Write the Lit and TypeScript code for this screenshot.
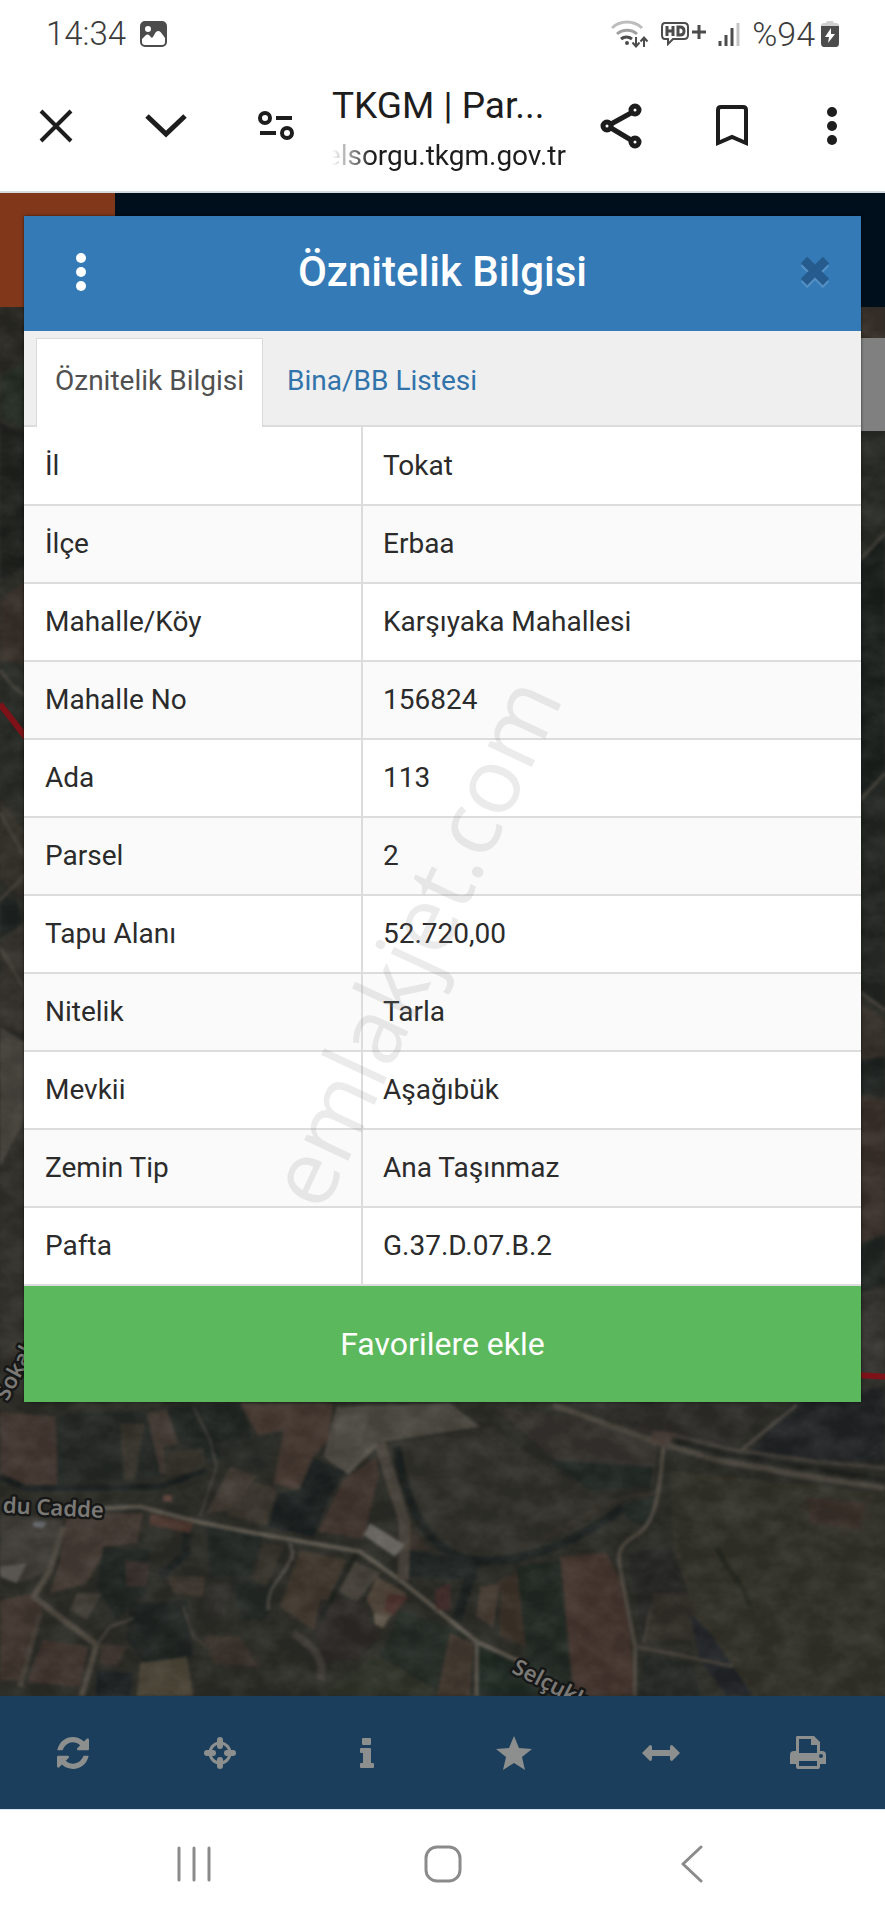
import { LitElement, html, svg, css } from "lit";
import { customElement, property } from "lit/decorators.js";

/* ---------- Satellite map ---------- */

type Shape = [points: string, fill: string];
type Stroke = [d: string, color: string, width: number];

const EDGE_FIELDS: Shape[] = [
  ["0,921 80,921 80,1300 0,1250", "#2b2a24"],
  ["0,1130 80,1080 80,1290 0,1250", "#232c22"],
  ["0,1270 80,1300 80,1700 0,1740", "#20221e"],
  ["0,1800 80,1740 80,1990 0,1980", "#3b312a"],
  ["0,1990 80,2000 80,2450 0,2380", "#292c26"],
  ["0,2400 80,2500 80,2700 0,2640", "#37332b"],
  ["0,2690 50,2700 70,2780 0,2810", "#1d2422"],
  ["0,2820 80,2760 80,3100 0,3080", "#37342e"],
  ["0,3080 80,3130 80,3350 0,3500", "#4c4740"],
  ["0,3520 80,3340 80,4200 0,4260", "#32312b"],
  ["2580,921 2655,921 2655,1020 2580,1020", "#3d342c"],
  ["2580,1290 2655,1290 2655,1590 2580,1680", "#2a2d26"],
  ["2580,1680 2655,1600 2655,2320 2580,2390", "#1a201d"],
  ["2580,2400 2655,2320 2655,3030 2580,2980", "#222622"],
  ["2580,3010 2655,3060 2655,3180 2580,3190", "#383029"],
  ["2580,3180 2655,3170 2655,3290 2580,3280", "#1d2321"],
  ["2580,3290 2655,3300 2655,3700 2580,3730", "#3c312b"],
  ["2580,3730 2655,3710 2655,3850 2580,3880", "#1f2522"],
  ["2580,3880 2655,3860 2655,4130 2580,4130", "#373530"],
];

const FIELDS: Shape[] = [
  ["0,95 165,110 175,320 60,315 0,285", "#483932"],
  ["175,105 440,90 490,290 170,330", "#252a26"],
  ["360,130 435,130 405,300 370,300", "#38352c"],
  ["440,100 500,90 535,190 490,200 500,280 480,280", "#463b34"],
  ["500,80 720,70 760,180 640,250 540,190", "#212724"],
  ["495,215 610,205 620,270 500,290", "#35322a"],
  ["720,70 1000,70 985,180 940,230 895,330 820,310 850,160 780,175", "#493930"],
  ["640,190 720,180 850,150 800,280 680,255", "#2b2d28"],
  ["1010,80 1350,70 1440,140 1150,185 1040,280 970,230", "#504b43"],
  ["940,235 1035,275 990,350 940,470 805,440 835,340 900,330", "#1b2121"],
  ["1130,230 1135,290 1090,475 955,455 1030,300", "#47372f"],
  ["690,260 770,290 700,390 620,400", "#463d35"],
  ["765,305 830,330 800,435 680,405", "#3f392f"],
  ["620,430 790,470 750,590 630,590", "#212825"],
  ["200,400 430,400 410,490 320,500 260,610 150,640 180,540", "#4a3d35"],
  ["0,400 190,420 150,570 60,610 0,560", "#413e38"],
  ["0,660 100,640 130,700 60,900 0,900", "#46382f"],
  ["130,780 265,800 240,920 80,905", "#44352e"],
  ["310,500 450,510 440,640 350,720 290,620", "#202724"],
  ["375,540 450,550 440,620 380,620", "#3a302b"],
  ["230,640 305,640 260,720 210,690", "#47423a"],
  ["300,790 380,800 350,860 300,850", "#423630"],
  ["390,670 560,660 580,830 440,860 380,780", "#1f2523"],
  ["500,590 615,590 610,650 520,640", "#423a31"],
  ["620,620 690,610 680,710 610,690", "#34332e"],
  ["690,600 830,610 800,720 730,720", "#252b26"],
  ["610,770 720,770 780,860 640,850", "#3d332c"],
  ["420,850 560,830 580,948 410,948", "#504838"],
  ["290,870 400,880 390,948 290,948", "#1c2223"],
  ["790,490 850,500 800,620 760,600", "#3a362c"],
  ["900,510 1040,540 940,750 840,680", "#443a2e"],
  ["1060,540 1140,580 1070,665 1010,630", "#48423a"],
  ["1130,590 1220,640 1150,745 1100,660", "#57493c"],
  ["960,660 1080,660 1140,760 1090,830 980,850 940,760", "#2e2b27"],
  ["1130,820 1320,930 1300,948 960,948", "#30352a"],
  ["1220,420 1290,510 1220,510", "#3d342d"],
  ["1220,510 1430,540 1430,600 1220,590", "#1d2423"],
  ["1200,690 1400,760 1340,948 1140,830", "#242c25"],
  ["1350,760 1420,790 1410,948 1310,948", "#473b30"],
  ["1440,620 1500,610 1480,740 1430,710", "#4b3e33"],
  ["1500,600 1570,570 1580,800 1500,770", "#3f3429"],
  ["1550,560 1690,540 1720,948 1590,900", "#222b24"],
  ["1680,530 1820,520 1880,640 1905,948 1720,948", "#49362e"],
  ["1435,790 1560,840 1740,948 1435,948", "#202a23"],
  ["1880,520 2010,500 2080,640 1930,780", "#272725"],
  ["1960,640 2080,640 2140,770 1930,790", "#333029"],
  ["1480,80 1980,150 1960,310 1740,320 1600,180", "#37342f"],
  ["1640,240 1960,260 1950,320 1770,330", "#212925"],
  ["1870,370 1960,350 1950,440 1880,420", "#222a25"],
  ["1680,60 2350,60 2200,200 2010,170", "#2f2e2a"],
  ["2380,60 2655,20 2655,250 2240,230", "#222426"],
  ["2010,270 2655,340 2655,948 2250,948 2100,760 2020,500", "#34342a"],
  ["2420,350 2600,370 2580,450 2430,430", "#3c3129"],
  ["2070,700 2130,760 2260,948 2180,948 2100,840", "#22252a"],
  ["1930,820 2080,850 2100,948 1920,948", "#262b26"],
];

const TREES: Stroke[] = [
  ["M1190 200 C1230 440 1310 530 1440 545 C1620 545 1780 450 1870 380", "#1c2322", 26],
  ["M1430 530 L1370 720", "#1c2322", 30],
  ["M0 290 L80 325 L480 320 L620 270", "#1a2020", 18],
  ["M2030 185 L2220 230 L2655 300", "#20231f", 14],
  ["M2150 500 C2180 580 2230 600 2250 680", "#262920", 16],
  ["M560 430 L560 520 L480 590", "#1e2524", 24],
  ["M1070 520 L960 720", "#20241f", 14],
  ["M880 760 C940 800 980 840 960 900", "#45403a", 24],
];

const ROADS: Stroke[] = [
  ["M310 385 L420 380 L590 425 L740 455 L1080 515 L1200 600 L1350 720 L1430 785 L1560 845", "#635d52", 13],
  ["M190 440 L150 570 L100 650 L290 795 L245 948", "#544d43", 18],
  ["M120 700 L60 920", "#4b433a", 16],
  ["M290 795 L330 740 L400 715", "#4e4a42", 8],
  ["M600 410 L650 260 L630 180 L580 80", "#454239", 7],
  ["M880 510 C860 600 800 600 805 690", "#57524a", 9],
  ["M870 490 L880 540", "#57524a", 9],
  ["M550 680 L580 770 L620 800", "#443e35", 8],
  ["M1140 190 L1215 430 L1210 600", "#4f483e", 34],
  ["M1130 190 L1040 280", "#5a554b", 14],
  ["M1660 75 L1950 180 L2150 240 L2400 285 L2655 325", "#4d473f", 18],
  ["M2000 160 L2200 210 L2450 245 L2655 265", "#45413a", 12],
  ["M2225 210 L2390 75", "#504b42", 10],
  ["M1990 200 C1980 320 1970 440 1900 470 C1840 510 1855 530 1870 620 L1905 800 L1905 948", "#544e44", 12],
  ["M1910 800 L2060 830 L2200 860", "#4b453c", 10],
  ["M1930 790 L1950 690", "#454036", 6],
  ["M1430 785 L1430 948", "#5e584e", 12],
  ["M1620 480 C1760 420 1820 340 1970 340", "#3b372f", 7],
];

const ROOFS: Shape[] = [
  ["1110,430 1215,495 1185,530 1090,465", "#6f6c66"],
  ["0,560 80,550 50,610 0,590", "#66635c"],
  ["1010,110 1110,100 1080,200 1000,210", "#59554d"],
  ["1165,640 1225,650 1180,705 1150,690", "#54342f"],
  ["1305,630 1350,610 1350,690 1310,690", "#482d2b"],
  ["450,400 580,430 570,460 450,435", "#54392f"],
  ["490,345 515,345 515,365 490,365", "#6b4840"],
  ["1960,150 2030,160 2000,200 1950,190", "#4d3f38"],
  ["100,425 140,425 130,445 100,440", "#6c7076"],
  ["1120,700 1165,710 1150,745 1125,735", "#6a6051"],
];

const shapes = (list: Shape[]) =>
  list.map(([points, fill]) => svg`<polygon points=${points} fill=${fill} />`);
const strokes = (list: Stroke[]) =>
  list.map(
    ([d, color, width]) =>
      svg`<path d=${d} stroke=${color} stroke-width=${width} fill="none" stroke-linejoin="round" />`
  );

@customElement("satellite-map")
export class SatelliteMap extends LitElement {
  static styles = css`
    :host {
      display: block;
      height: 0;
      min-height: 100%;
      overflow: hidden;
    }
    svg {
      display: block;
      width: 100%;
      height: 100%;
    }
    .label {
      font: 600 66px "Noto Sans", sans-serif;
      fill: #7b7975;
      stroke: #161716;
      stroke-width: 14px;
      paint-order: stroke;
      stroke-linejoin: round;
    }
  `;

  render() {
    return html`
      <svg viewBox="0 579 2655 4509" preserveAspectRatio="xMidYMid slice" role="img" aria-label="Harita">
        <defs>
          <filter id="soft" x="0" y="0" width="1" height="1" color-interpolation-filters="sRGB">
            <feGaussianBlur stdDeviation="5" />
            <feColorMatrix type="saturate" values="0.85" />
          </filter>
          <filter id="grain" x="0" y="0" width="1" height="1" color-interpolation-filters="sRGB">
            <feTurbulence type="fractalNoise" baseFrequency="0.012 0.016" numOctaves="4" seed="7" />
            <feColorMatrix values="1 0 0 0 -0.32  1 0 0 0 -0.32  1 0 0 0 -0.34  0 0 0 0 0.13" />
          </filter>
        </defs>
        <rect y="579" width="2655" height="4509" fill="#2d2d28" />
        <g filter="url(#soft)">
          ${shapes(EDGE_FIELDS)}
          <g fill="none" stroke="#4a463d" stroke-width="9">
            <path d="M0 2010 L40 2060 L80 2090" />
            <path d="M0 2440 L80 2580 M0 2700 L80 2620 M0 2840 L80 2980" />
            <path d="M2580 1680 L2655 1600 M2580 2400 L2655 2320 M2580 2975 L2655 3030" />
          </g>
          <g transform="translate(0 4140)">
            ${shapes(FIELDS)}
            <path d="M1160 195 L1480 140 C1560 200 1700 320 1870 370 C1760 470 1600 540 1430 540 C1340 520 1230 480 1220 400Z" fill="#33322b" />
            ${strokes(TREES)} ${strokes(ROADS)} ${shapes(ROOFS)}
          </g>
        </g>
        <rect y="579" width="2655" height="4509" filter="url(#grain)" />
        <g fill="none" stroke="#7d1318" stroke-width="18">
          <path d="M0 2112 L80 2215" />
          <path d="M2570 4125 L2655 4130" />
        </g>
        <text class="label" transform="translate(310 4554) rotate(3)" text-anchor="end">du Cadde</text>
        <text class="label" transform="translate(1532 5016) rotate(27)">Selçuklu</text>
        <text class="label" transform="translate(22 4206) rotate(-62)">Sokak</text>
      </svg>
    `;
  }
}

/* ---------- Icons ---------- */

const icons = {
  picture: svg`<svg width="27" height="26" viewBox="0 0 27 26"><path fill="#4c4c4c" fill-rule="evenodd" d="M5 0h17a5 5 0 0 1 5 5v16a5 5 0 0 1-5 5H5a5 5 0 0 1-5-5V5a5 5 0 0 1 5-5zM8 5a3 3 0 1 0 0 6 3 3 0 0 0 0-6zM2 18v3c0 2 1 3 3 3h17c2 0 3-1 3-3v-4c-4-6-5-7-7-7s-3 2-5 6c-1 1-2 1-3-1-2-2-3-2-5 0z"/></svg>`,
  wifi: svg`<svg width="38" height="28" viewBox="0 0 38 28" fill="none" stroke-width="3"><path stroke="#bdbdbd" d="M1 8a22 22 0 0 1 30 0"/><path stroke="#a0a0a0" d="M6 14a15 15 0 0 1 20 0"/><path stroke="#4c4c4c" d="M10 19a9 9 0 0 1 11 0"/><circle cx="16" cy="23" r="2" fill="#4c4c4c"/><path stroke="#4c4c4c" stroke-width="2" d="M25 17v9M21.500 22.500l3.500 4 3.500-4M33 27v-9M29.500 21.500l3.500-4 3.500 4"/></svg>`,
  hd: svg`<svg width="45" height="24" viewBox="0 0 45 24" fill="none" stroke="#4c4c4c"><path stroke-width="2" d="M4 1h19q4 0 4 4v8q0 4-4 4H12l-5 5v-5H4q-3 0-3-4V5q0-4 3-4z"/><path stroke-width="3" d="M6 4v10M12 4v10M6 9h6M17 5v8h2q4 0 4-4t-4-4zM31 10h14M38 3v14"/></svg>`,
  signal: svg`<svg width="22" height="24" viewBox="0 0 22 24" stroke-width="3"><path stroke="#4c4c4c" d="M2 24v-5M8 24V13M14 24V6"/><path stroke="#c4c4c4" d="M20 24V1"/></svg>`,
  battery: svg`<svg width="18" height="26" viewBox="0 0 18 26"><path fill="#cfcfcf" d="M5 2q0-2 2-2h4q2 0 2 2h2q3 0 3 3H0q0-3 3-3z"/><path fill="#4c4c4c" fill-rule="evenodd" d="M0 5h18v17q0 4-3 4H3q-3 0-3-4zM10 7l-6 9h4l-1 6 7-9h-4z"/></svg>`,
  close: svg`<svg width="34" height="34" viewBox="0 0 34 34" fill="none" stroke="#1d1d1d" stroke-width="4"><path d="M2 2l30 30M32 2L2 32"/></svg>`,
  down: svg`<svg width="42" height="26" viewBox="0 0 42 26" fill="none" stroke="#1d1d1d" stroke-width="5"><path d="M2 3l19 18L40 3"/></svg>`,
  tune: svg`<svg width="36" height="30" viewBox="0 0 36 30" fill="none" stroke="#1d1d1d" stroke-width="4"><circle cx="7" cy="7" r="5"/><circle cx="29" cy="22" r="5"/><path d="M18 7h16M2 22h16"/></svg>`,
  share: svg`<svg width="42" height="46" viewBox="0 0 42 46" fill="none" stroke="#1d1d1d" stroke-width="5"><circle cx="35" cy="7" r="4"/><circle cx="7" cy="23" r="4"/><circle cx="35" cy="39" r="4"/><path d="M11 21l20-11M11 25l20 12"/></svg>`,
  bookmark: svg`<svg width="34" height="42" viewBox="0 0 34 42" fill="none" stroke="#1d1d1d" stroke-width="4"><path d="M3 38V5q0-3 3-3h22q3 0 3 3v33l-14-6z"/></svg>`,
  dots: svg`<svg width="12" height="40" viewBox="0 0 12 40" fill="currentColor"><circle cx="6" cy="6" r="5"/><circle cx="6" cy="20" r="5"/><circle cx="6" cy="34" r="5"/></svg>`,
  cross: svg`<svg width="30" height="32" viewBox="0 0 30 32" fill="none" stroke-width="9"><path stroke="#5490c4" d="M4 7l22 22M26 7L4 29"/><path stroke="#265c8d" d="M4 4l22 22M26 4L4 26"/></svg>`,
  refresh: svg`<svg width="32" height="32" viewBox="0 0 1536 1536" fill="#8c8f8d"><path d="M1511 928q0 5-1 7-64 268-268 434.500T764 1536q-146 0-282.500-55T238 1324l-129 129q-19 19-45 19t-45-19-19-45V960q0-26 19-45t45-19h448q26 0 45 19t19 45-19 45l-137 137q71 66 161 102t187 36q134 0 250-65t186-179q11-17 53-117 8-23 30-23h192q13 0 22.500 9.500t9.500 22.500zm25-800v448q0 26-19 45t-45 19h-448q-26 0-45-19t-19-45 19-45l138-138Q969 256 768 256q-134 0-250 65T332 500q-11 17-53 117-8 23-30 23H50q-13 0-22.500-9.500T18 608v-7q65-268 270-434.500T768 0q146 0 284 55.500T1297 212l130-129q19-19 45-19t45 19 19 45z"/></svg>`,
  target: svg`<svg width="32" height="32" viewBox="0 0 32 32" fill="none" stroke="#8c8f8d"><circle cx="16" cy="16" r="10" stroke-width="3"/><path stroke-width="6" stroke-linecap="round" d="M16 3v6M16 23v6M3 16h6M23 16h6"/></svg>`,
  info: svg`<svg width="14" height="30" viewBox="0 0 14 30" fill="#8c8f8d"><path d="M3 0h7q1 0 1 1v5q0 1-1 1H3q-1 0-1-1V1q0-1 1-1zM1 10h9q1 0 1 1v14h2q1 0 1 1v3q0 1-1 1H1q-1 0-1-1v-3q0-1 1-1h2V15H1q-1 0-1-1v-3q0-1 1-1z"/></svg>`,
  star: svg`<svg width="36" height="34" viewBox="0 0 36 34" fill="#8c8f8d"><path d="M18 0l5 12 13 1-10 8 3 13-11-7-11 7 3-13-10-8 13-1z"/></svg>`,
  arrows: svg`<svg width="38" height="16" viewBox="0 0 38 16" fill="#8c8f8d"><path d="M0 8l8-8q2 0 2 2v3h18V2q0-2 2-2l8 8-8 8q-2 0-2-2v-3H10v3q0 2-2 2z"/></svg>`,
  print: svg`<svg width="36" height="33" viewBox="0 0 36 33"><path fill="#8c8f8d" fill-rule="evenodd" d="M7 0h17l6 6v9h2q4 0 4 4v9h-6v3q0 2-2 2H8q-2 0-2-2v-3H0v-9q0-4 4-4h2V2q0-2 1-2zm2 3v14h18V9h-6V3zm0 22v5h18v-5zm22-7a2 2 0 1 0 0 4 2 2 0 0 0 0-4z"/></svg>`,
  recents: svg`<svg width="34" height="36" viewBox="0 0 34 36" stroke="#8b8b8b" stroke-width="3" stroke-linecap="round"><path d="M2 2v32M17 2v32M32 2v32"/></svg>`,
  home: svg`<svg width="38" height="38" viewBox="0 0 38 38" fill="none" stroke="#8b8b8b" stroke-width="3"><rect x="2" y="2" width="34" height="34" rx="11"/></svg>`,
  back: svg`<svg width="22" height="38" viewBox="0 0 22 38" fill="none" stroke="#8b8b8b" stroke-width="3" stroke-linecap="round" stroke-linejoin="round"><path d="M20 2L2 19l18 17"/></svg>`,
};

/* ---------- Page ---------- */

const ROWS: [string, string][] = [
  ["İl", "Tokat"],
  ["İlçe", "Erbaa"],
  ["Mahalle/Köy", "Karşıyaka Mahallesi"],
  ["Mahalle No", "156824"],
  ["Ada", "113"],
  ["Parsel", "2"],
  ["Tapu Alanı", "52.720,00"],
  ["Nitelik", "Tarla"],
  ["Mevkii", "Aşağıbük"],
  ["Zemin Tip", "Ana Taşınmaz"],
  ["Pafta", "G.37.D.07.B.2"],
];

const TOOLS: [string, unknown][] = [
  ["Yenile", icons.refresh],
  ["Konum", icons.target],
  ["Bilgi", icons.info],
  ["Favoriler", icons.star],
  ["Ölçüm", icons.arrows],
  ["Yazdır", icons.print],
];

@customElement("app-root")
export class AppRoot extends LitElement {
  @property() heading = "Öznitelik Bilgisi";

  static styles = css`
    :host {
      display: flex;
      flex-direction: column;
      min-height: 100vh;
      background: #fff;
      color: #2b2b2b;
      font-family: Roboto, sans-serif;
      font-size: 28px;
      line-height: 32px;
    }
    * {
      box-sizing: border-box;
    }
    svg {
      display: block;
      flex: none;
    }
    button {
      display: flex;
      align-items: center;
      justify-content: center;
      padding: 0;
      border: 0;
      background: none;
      color: inherit;
      font: inherit;
    }

    .status {
      display: flex;
      align-items: center;
      gap: 14px;
      padding: 18px 46px 0 46px;
      font-size: 33px;
      font-weight: 300;
      color: #3c3c3c;
    }
    .indicators {
      display: flex;
      align-items: center;
      gap: 12px;
      margin-left: auto;
    }
    .charge {
      display: flex;
      align-items: center;
      gap: 6px;
      font-size: 34px;
    }

    .browser {
      display: flex;
      align-items: center;
      height: 143px;
      padding: 14px 36px 4px 28px;
      border-bottom: 2px solid #d5dade;
      color: #1d1d1d;
    }
    .browser button {
      flex: none;
      width: 56px;
      height: 56px;
    }
    .left {
      display: flex;
      gap: 54px;
    }
    .address {
      flex: 1;
      min-width: 0;
      padding: 8px 0 0 28px;
    }
    .title {
      overflow: hidden;
      font-size: 37px;
      line-height: 44px;
      white-space: nowrap;
    }
    .url {
      display: flex;
      justify-content: flex-end;
      width: 234px;
      max-width: 100%;
      overflow: hidden;
      padding-top: 8px;
      line-height: 40px;
      white-space: nowrap;
      -webkit-mask-image: linear-gradient(90deg, transparent, #000 40px);
      mask-image: linear-gradient(90deg, transparent, #000 40px);
    }
    .right {
      display: flex;
      gap: 55px;
    }
    .browser .more {
      width: 34px;
    }

    .stage {
      display: grid;
      flex: 1;
      grid-template-columns: minmax(0, 1fr);
      grid-template-rows: 1fr;
    }
    .stage > * {
      grid-area: 1 / 1;
    }
    .site {
      display: flex;
      flex-direction: column;
      gap: 31px;
    }
    .banner {
      display: flex;
      height: 114px;
      background: #000f1c;
    }
    .logo {
      width: 13%;
      background: #81381a;
    }
    .panel {
      align-self: flex-end;
      width: 48px;
      height: 93px;
      background: #808080;
    }

    .modal {
      align-self: start;
      margin: 23px 24px 40px;
      background: #fff;
      box-shadow: 0 0 3px rgba(0, 0, 0, 0.6);
    }
    .head {
      display: grid;
      grid-template-columns: 114px 1fr 92px;
      align-items: center;
      height: 115px;
      padding-bottom: 4px;
      background: #337ab7;
      color: #fff;
    }
    .head > * {
      grid-row: 1;
    }
    h1 {
      grid-column: 1 / -1;
      margin: 0;
      font-size: 42px;
      font-weight: 500;
      line-height: 48px;
      text-align: center;
    }
    .head button {
      height: 64px;
    }
    .options {
      grid-column: 1;
    }
    .dismiss {
      grid-column: 3;
    }
    .tabs {
      display: flex;
      height: 96px;
      padding: 7px 12px 0;
      background: #efefef;
      border-bottom: 2px solid #dcdcdc;
    }
    .tab {
      margin-bottom: -2px;
      padding: 0 18px 4px;
      border: 1px solid transparent;
      border-bottom: 0;
      color: #3173ab;
    }
    .tab + .tab {
      margin-left: 5px;
    }
    .tab.active {
      border-color: #dadada;
      background: #fff;
      color: #505050;
    }
    .records {
      position: relative;
    }
    table {
      width: 100%;
      border-collapse: collapse;
      table-layout: fixed;
    }
    th,
    td {
      height: 78px;
      padding: 0 20px;
      border: 2px solid #dcdcdc;
      border-top: 0;
      font-weight: 400;
      text-align: left;
    }
    th {
      width: 338px;
      padding-left: 21px;
      border-left: 0;
    }
    td {
      border-right: 0;
    }
    tr:nth-child(even) {
      background: #fafafa;
    }
    .watermark {
      position: absolute;
      top: 514px;
      left: 388px;
      color: rgba(128, 128, 128, 0.16);
      font-family: "Open Sans", sans-serif;
      font-size: 91px;
      line-height: 96px;
      pointer-events: none;
      transform: translate(-50%, -50%) rotate(-65deg);
    }
    .save {
      width: 100%;
      height: 116px;
      background: #5cb85c;
      color: #fff;
      font-size: 32px;
    }

    .tools {
      display: grid;
      grid-template-columns: repeat(6, 1fr);
      height: 113px;
      padding-right: 4px;
      background: #1b3e5d;
    }
    .nav {
      display: grid;
      grid-template-columns: repeat(3, 249px);
      justify-content: center;
      height: 111px;
      padding-bottom: 2px;
      border-top: 1px solid #dde6ee;
    }
  `;

  render() {
    return html`
      <div class="status">
        <time>14:34</time>${icons.picture}
        <div class="indicators">
          ${icons.wifi} ${icons.hd} ${icons.signal}
          <div class="charge"><span>%94</span>${icons.battery}</div>
        </div>
      </div>
      <header class="browser">
        <div class="left">
          <button aria-label="Kapat">${icons.close}</button>
          <button aria-label="Küçült">${icons.down}</button>
          <button aria-label="Site ayarları">${icons.tune}</button>
        </div>
        <div class="address">
          <div class="title">TKGM | Par...</div>
          <div class="url"><span>elsorgu.tkgm.gov.tr</span></div>
        </div>
        <div class="right">
          <button aria-label="Paylaş">${icons.share}</button>
          <button aria-label="Yer işareti">${icons.bookmark}</button>
          <button class="more" aria-label="Menü">${icons.dots}</button>
        </div>
      </header>

      <main class="stage">
        <satellite-map></satellite-map>
        <div class="site">
          <div class="banner"><div class="logo"></div></div>
          <div class="panel"></div>
        </div>
        <section class="modal" role="dialog" aria-labelledby="heading">
          <div class="head">
            <h1 id="heading">${this.heading}</h1>
            <button class="options" aria-label="Seçenekler">${icons.dots}</button>
            <button class="dismiss" aria-label="Pencereyi kapat">${icons.cross}</button>
          </div>
          <div class="tabs" role="tablist">
            <button class="tab active" role="tab" aria-selected="true">Öznitelik Bilgisi</button>
            <button class="tab" role="tab" aria-selected="false">Bina/BB Listesi</button>
          </div>
          <div class="records">
            <table>
              <tbody>
                ${ROWS.map(([name, value]) => html`<tr><th scope="row">${name}</th><td>${value}</td></tr>`)}
              </tbody>
            </table>
            <div class="watermark">emlakjet.com</div>
          </div>
          <button class="save">Favorilere ekle</button>
        </section>
      </main>

      <div class="tools" role="toolbar">
        ${TOOLS.map(([label, icon]) => html`<button aria-label=${label}>${icon}</button>`)}
      </div>
      <nav class="nav">
        <button aria-label="Son uygulamalar">${icons.recents}</button>
        <button aria-label="Ana ekran">${icons.home}</button>
        <button aria-label="Geri">${icons.back}</button>
      </nav>
    `;
  }
}
